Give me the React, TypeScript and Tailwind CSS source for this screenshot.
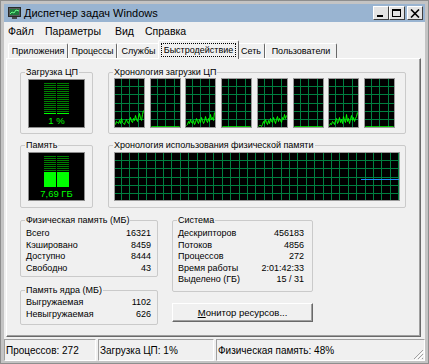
import React from "react";

const cpuHistory: number[][] = [
  [2, 5, 4, 3, 6, 3, 8, 4, 3, 2, 5, 7, 4, 3, 6, 9, 5, 4, 8, 6, 11, 7, 5, 9, 13, 8, 6, 12, 16],
  [],
  [1, 2, 5, 3, 7, 4, 3, 6, 2, 4, 8, 5, 3, 7, 4, 9, 6, 3, 5, 10, 6, 4, 8, 5, 12, 7, 9, 6, 14],
  [],
  [0, 1, 1, 0, 2, 5, 3, 7, 4, 2, 6, 3, 8, 5, 4, 9, 6, 3, 7, 10, 5, 8, 6, 4, 9, 7, 12, 8, 11],
  [],
  [1, 3, 2, 5, 4, 2, 6, 8, 3, 5, 9, 4, 7, 3, 10, 6, 4, 12, 5, 8, 3, 7, 11, 6, 9, 5, 8, 10, 14],
  [],
];

const physMemory = [
  ["Всего", "16321"],
  ["Кэшировано", "8459"],
  ["Доступно", "8444"],
  ["Свободно", "43"],
];

const systemInfo = [
  ["Дескрипторов", "456183"],
  ["Потоков", "4856"],
  ["Процессов", "272"],
  ["Время работы", "2:01:42:33"],
  ["Выделено (ГБ)", "15 / 31"],
];

const kernelMemory = [
  ["Выгружаемая", "1102"],
  ["Невыгружаемая", "626"],
];

const tabs = [
  { label: "Приложения", w: "w-[60px]" },
  { label: "Процессы", w: "w-[49px]" },
  { label: "Службы", w: "w-[43px]" },
  { label: "Быстродействие", w: "w-[81px]", active: true },
  { label: "Сеть", w: "w-[28px]" },
  { label: "Пользователи", w: "w-[72px]" },
];

function AppIcon() {
  return (
    <svg width="13" height="12" viewBox="0 0 13 12">
      <rect x="0.5" y="0.5" width="12" height="9" fill="#5a5a5a" stroke="#2a2a2a" />
      <rect x="2" y="2" width="9" height="6" fill="#1f7a3c" />
      <polyline points="2,7 4,5 6,6 8,3 11,4" fill="none" stroke="#6dff8a" strokeWidth="1" />
      <rect x="4" y="10" width="5" height="2" fill="#4a4a4a" />
    </svg>
  );
}

function CaptionButton({ kind }: { kind: "min" | "max" | "close" }) {
  return (
    <div className="w-[16px] h-[14px] bg-[#e4e4e4] border border-t-white border-l-white border-r-[#404040] border-b-[#404040] flex items-center justify-center">
      <svg width="10" height="9" viewBox="0 0 10 9" shapeRendering="crispEdges">
        {kind === "min" && <rect x="1" y="6" width="6" height="2" fill="#000" />}
        {kind === "max" && (
          <>
            <rect x="0.5" y="0.5" width="8" height="7" fill="none" stroke="#000" />
            <rect x="0" y="0" width="9" height="2" fill="#000" />
          </>
        )}
        {kind === "close" && (
          <g stroke="#000" strokeWidth="1.6" shapeRendering="auto">
            <line x1="1" y1="0.5" x2="9" y2="8.5" />
            <line x1="9" y1="0.5" x2="1" y2="8.5" />
          </g>
        )}
      </svg>
    </div>
  );
}

function GroupBox({
  title,
  className,
  children,
}: {
  title: string;
  className: string;
  children?: React.ReactNode;
}) {
  return (
    <fieldset className={`border border-[#cacaca] rounded-[2px] p-0 m-0 min-w-0 ${className}`}>
      <legend className="ml-[4px] px-[1px] text-[9px] leading-[13px]">{title}</legend>
      {children}
    </fieldset>
  );
}

function Meter({ fillFrom, label }: { fillFrom: number; label: string }) {
  const rows = [];
  for (let y = 0; y < 31; y += 2) rows.push(y);
  return (
    <div className="mx-[7px] h-[49px] bg-black border border-[#8c8c8c] flex flex-col items-center pt-[3px]">
      <svg width="25" height="31" viewBox="0 0 25 31" shapeRendering="crispEdges">
        {rows.map((y) => (
          <g key={y} fill={y >= fillFrom ? "#00ff00" : "#007f00"}>
            <rect x="0" y={y} width="12" height={y >= fillFrom ? 2 : 1} />
            <rect x="13" y={y} width="12" height={y >= fillFrom ? 2 : 1} />
          </g>
        ))}
      </svg>
      <span className="text-[9.5px] leading-[12px] mt-[1px] text-[#00ff00]">{label}</span>
    </div>
  );
}

function Grid({ w, h }: { w: number; h: number }) {
  const xs: number[] = [];
  for (let x = 6; x < w; x += 8.4) xs.push(Math.round(x));
  const ys: number[] = [];
  for (let y = 7; y < h; y += 8.3) ys.push(Math.round(y));
  return (
    <g stroke="#008040" strokeWidth="1">
      {xs.map((x) => (
        <line key={`x${x}`} x1={x + 0.5} y1="0" x2={x + 0.5} y2={h} />
      ))}
      {ys.map((y) => (
        <line key={`y${y}`} x1="0" y1={y + 0.5} x2={w} y2={y + 0.5} />
      ))}
    </g>
  );
}

function CpuGraph({ data }: { data: number[] }) {
  const w = 29;
  const h = 48;
  const values = data.length ? data : new Array(w).fill(0);
  const points = values.map((v, i) => `${i + 0.5},${h - 0.5 - v}`).join(" ");
  return (
    <div className="w-[31px] h-[50px] border border-[#9a9a9a] bg-black">
      <svg width={w} height={h} viewBox={`0 0 ${w} ${h}`} shapeRendering="crispEdges">
        <Grid w={w} h={h} />
        <polyline points={points} fill="none" stroke="#00ff00" strokeWidth="1" shapeRendering="auto" />
      </svg>
    </div>
  );
}

function MemoryGraph() {
  const w = 284;
  const h = 47;
  return (
    <div className="w-[286px] h-[49px] border border-[#9a9a9a] bg-black">
      <svg width={w} height={h} viewBox={`0 0 ${w} ${h}`} shapeRendering="crispEdges">
        <Grid w={w} h={h} />
        <line x1="246" y1="26.5" x2={w} y2="26.5" stroke="#1e88ff" strokeWidth="1" />
      </svg>
    </div>
  );
}

function InfoRows({ rows }: { rows: string[][] }) {
  return (
    <div className="flex flex-col text-[9px]">
      {rows.map(([k, v]) => (
        <div key={k} className="flex justify-between h-[11.5px] leading-[11.5px]">
          <span>{k}</span>
          <span>{v}</span>
        </div>
      ))}
    </div>
  );
}

function StatusCell({ className, children }: { className: string; children?: React.ReactNode }) {
  return (
    <div
      className={`h-[22px] border border-t-[#a0a0a0] border-l-[#a0a0a0] border-r-white border-b-white flex items-center pl-[1px] text-[10px] ${className}`}
    >
      {children}
    </div>
  );
}

export default function App() {
  return (
    <div className="w-[429px] h-[364px] bg-[#c4c4c4] border border-[#8e8e8e] px-[3px] pt-[3px] pb-[2px] flex flex-col font-['Liberation_Sans',Arial,sans-serif] text-black select-none">
      {/* title bar */}
      <div className="h-[18px] bg-[#99b4d1] flex items-center pl-[4px] pr-[2px]">
        <AppIcon />
        <span className="ml-[3px] text-[11px] leading-none">Диспетчер задач Windows</span>
        <div className="ml-auto flex items-center">
          <CaptionButton kind="min" />
          <CaptionButton kind="max" />
          <div className="ml-[2px]">
            <CaptionButton kind="close" />
          </div>
        </div>
      </div>

      <div className="flex-1 bg-[#f0f0f0] flex flex-col">
        {/* menu */}
        <div className="h-[19px] flex items-center pl-[4px] text-[10.5px]">
          <span className="w-[37px]">Файл</span>
          <span className="w-[70px]">Параметры</span>
          <span className="w-[30px]">Вид</span>
          <span>Справка</span>
        </div>

        {/* tabs */}
        <div className="h-[17px] flex items-end pl-[4px]">
          {tabs.map((t) =>
            t.active ? (
              <div
                key={t.label}
                className={`${t.w} -mx-[2px] h-[19px] -mb-[1px] relative z-10 bg-[#f0f0f0] border border-b-0 border-t-white border-l-white border-r-[#696969] rounded-t-[2px] flex items-start justify-center pt-[2px]`}
              >
                <span className="border border-dotted border-black px-[2px] text-[9px] leading-[12px]">
                  {t.label}
                </span>
              </div>
            ) : (
              <div
                key={t.label}
                className={`${t.w} h-[15px] border border-b-0 border-t-white border-l-white border-r-[#696969] rounded-t-[2px] text-[9px] leading-[14px] text-center`}
              >
                {t.label}
              </div>
            )
          )}
        </div>

        {/* tab page */}
        <div className="h-[279px] ml-[2px] mr-[4px] border border-t-white border-l-white border-r-[#696969] border-b-[#696969] shadow-[inset_-1px_-1px_0_#a0a0a0] pl-[13px] pt-[7px] flex flex-col">
          <div className="flex gap-[15px]">
            <GroupBox title="Загрузка ЦП" className="w-[73px] h-[68px]">
              <Meter fillFrom={30} label="1 %" />
            </GroupBox>
            <GroupBox title="Хронология загрузки ЦП" className="w-[298px] h-[68px]">
              <div className="w-[281px] ml-[5px] -mt-[1px] flex justify-between">
                {cpuHistory.map((d, i) => (
                  <CpuGraph key={i} data={d} />
                ))}
              </div>
            </GroupBox>
          </div>

          <div className="flex gap-[15px] mt-[5px]">
            <GroupBox title="Память" className="w-[73px] h-[69px]">
              <Meter fillFrom={15} label="7,69 ГБ" />
            </GroupBox>
            <GroupBox title="Хронология использования физической памяти" className="w-[298px] h-[69px]">
              <div className="ml-[5px]">
                <MemoryGraph />
              </div>
            </GroupBox>
          </div>

          <div className="flex gap-[14px] mt-[6px]">
            <div className="flex flex-col gap-[7px]">
              <GroupBox title="Физическая память (МБ)" className="w-[138px] h-[63px]">
                <div className="pl-[5px] pr-[6px] pt-[1px]">
                  <InfoRows rows={physMemory} />
                </div>
              </GroupBox>
              <GroupBox title="Память ядра (МБ)" className="w-[138px] h-[41px]">
                <div className="pl-[5px] pr-[6px]">
                  <InfoRows rows={kernelMemory} />
                </div>
              </GroupBox>
            </div>
            <div className="flex flex-col">
              <GroupBox title="Система" className="w-[141px] h-[78px]">
                <div className="pl-[5px] pr-[8px] pt-[1px]">
                  <InfoRows rows={systemInfo} />
                </div>
              </GroupBox>
              <button className="mt-[11px] w-[141px] h-[19px] bg-[#f0f0f0] border border-t-white border-l-white border-r-[#696969] border-b-[#696969] shadow-[inset_-1px_-1px_0_#a0a0a0] text-[9.5px] leading-none">
                <span className="underline">М</span>онитор ресурсов...
              </button>
            </div>
          </div>
        </div>

        {/* status bar */}
        <div className="mt-[2px] flex gap-[2px]">
          <StatusCell className="w-[92px]">Процессов: 272</StatusCell>
          <StatusCell className="w-[116px]">Загрузка ЦП: 1%</StatusCell>
          <StatusCell className="flex-1 relative">
            Физическая память: 48%
            <svg className="absolute right-0 bottom-0" width="12" height="12" viewBox="0 0 12 12">
              <g strokeWidth="1">
                <line x1="11" y1="2" x2="2" y2="11" stroke="#a0a0a0" />
                <line x1="11" y1="6" x2="6" y2="11" stroke="#a0a0a0" />
                <line x1="11" y1="10" x2="10" y2="11" stroke="#a0a0a0" />
                <line x1="12" y1="3" x2="3" y2="12" stroke="#fff" />
                <line x1="12" y1="7" x2="7" y2="12" stroke="#fff" />
              </g>
            </svg>
          </StatusCell>
        </div>
      </div>
    </div>
  );
}
